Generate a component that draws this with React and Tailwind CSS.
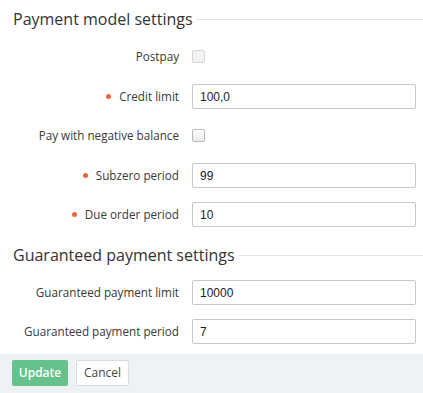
export default function App() {
  const font = { fontFamily: '"Open Sans", "Noto Sans", sans-serif' };
  const Label = ({ children, required }) => (
    <div className="w-[179px] shrink-0 flex items-center justify-end text-[11.7px] text-[#3a3a3a]">
      {required && <span className="w-[5px] h-[5px] rounded-full bg-[#f0643c] mr-[8px]" />}
      <span>{children}</span>
    </div>
  );
  const Input = ({ value }) => (
    <div className="ml-[13px] w-[224px] h-[25px] border border-[#c5c9ce] rounded-[2px] bg-white flex items-center pl-[7px] text-[12px] text-[#222]" style={{ fontFamily: '"Liberation Sans", Arial, sans-serif' }}>
      {value}
    </div>
  );
  const Check = ({ disabled }) => (
    <div className="ml-[13px] flex items-center h-[25px]">
      <div className={disabled ? "w-[13px] h-[13px] rounded-[2px] border border-[#d6d6d6] bg-[#f2f2f2]" : "w-[13px] h-[13px] rounded-[2px] border border-[#b8b8b8] bg-gradient-to-b from-white to-[#eaeaea]"} />
    </div>
  );
  const Heading = ({ children, className }) => (
    <div className={"flex items-center h-[24px] " + className}>
      <span className="pl-[13px] text-[16px] text-[#333] leading-[24px] pr-[4px]">{children}</span>
      <div className="flex-1 border-t border-[#e1e3e5]" />
    </div>
  );
  return (
    <div className="w-[423px] h-[393px] bg-white flex flex-col overflow-hidden" style={font}>
      <Heading className="mt-[7px]">Payment model settings</Heading>
      <div className="flex h-[25px] mt-[13px]"><Label>Postpay</Label><Check disabled /></div>
      <div className="flex h-[25px] mt-[15px]"><Label required>Credit limit</Label><Input value="100,0" /></div>
      <div className="flex h-[25px] mt-[14px]"><Label>Pay with negative balance</Label><Check /></div>
      <div className="flex h-[25px] mt-[15px]"><Label required>Subzero period</Label><Input value="99" /></div>
      <div className="flex h-[25px] mt-[14px]"><Label required>Due order period</Label><Input value="10" /></div>
      <Heading className="mt-[16px]">Guaranteed payment settings</Heading>
      <div className="flex h-[25px] mt-[13px]"><Label>Guaranteed payment limit</Label><Input value="10000" /></div>
      <div className="flex h-[25px] mt-[14px]"><Label>Guaranteed payment period</Label><Input value="7" /></div>
      <div className="mt-[10px] flex-1 bg-[#eef2f5] flex items-start pt-[6px] pl-[12px] gap-[8px]">
        <div className="h-[26px] w-[56px] rounded-[2px] bg-[#66c28d] text-white text-[12px] font-semibold flex items-center justify-center">Update</div>
        <div className="h-[26px] w-[53px] rounded-[2px] bg-white border border-[#d9dde1] text-[#444] text-[12px] flex items-center justify-center">Cancel</div>
      </div>
    </div>
  );
}
